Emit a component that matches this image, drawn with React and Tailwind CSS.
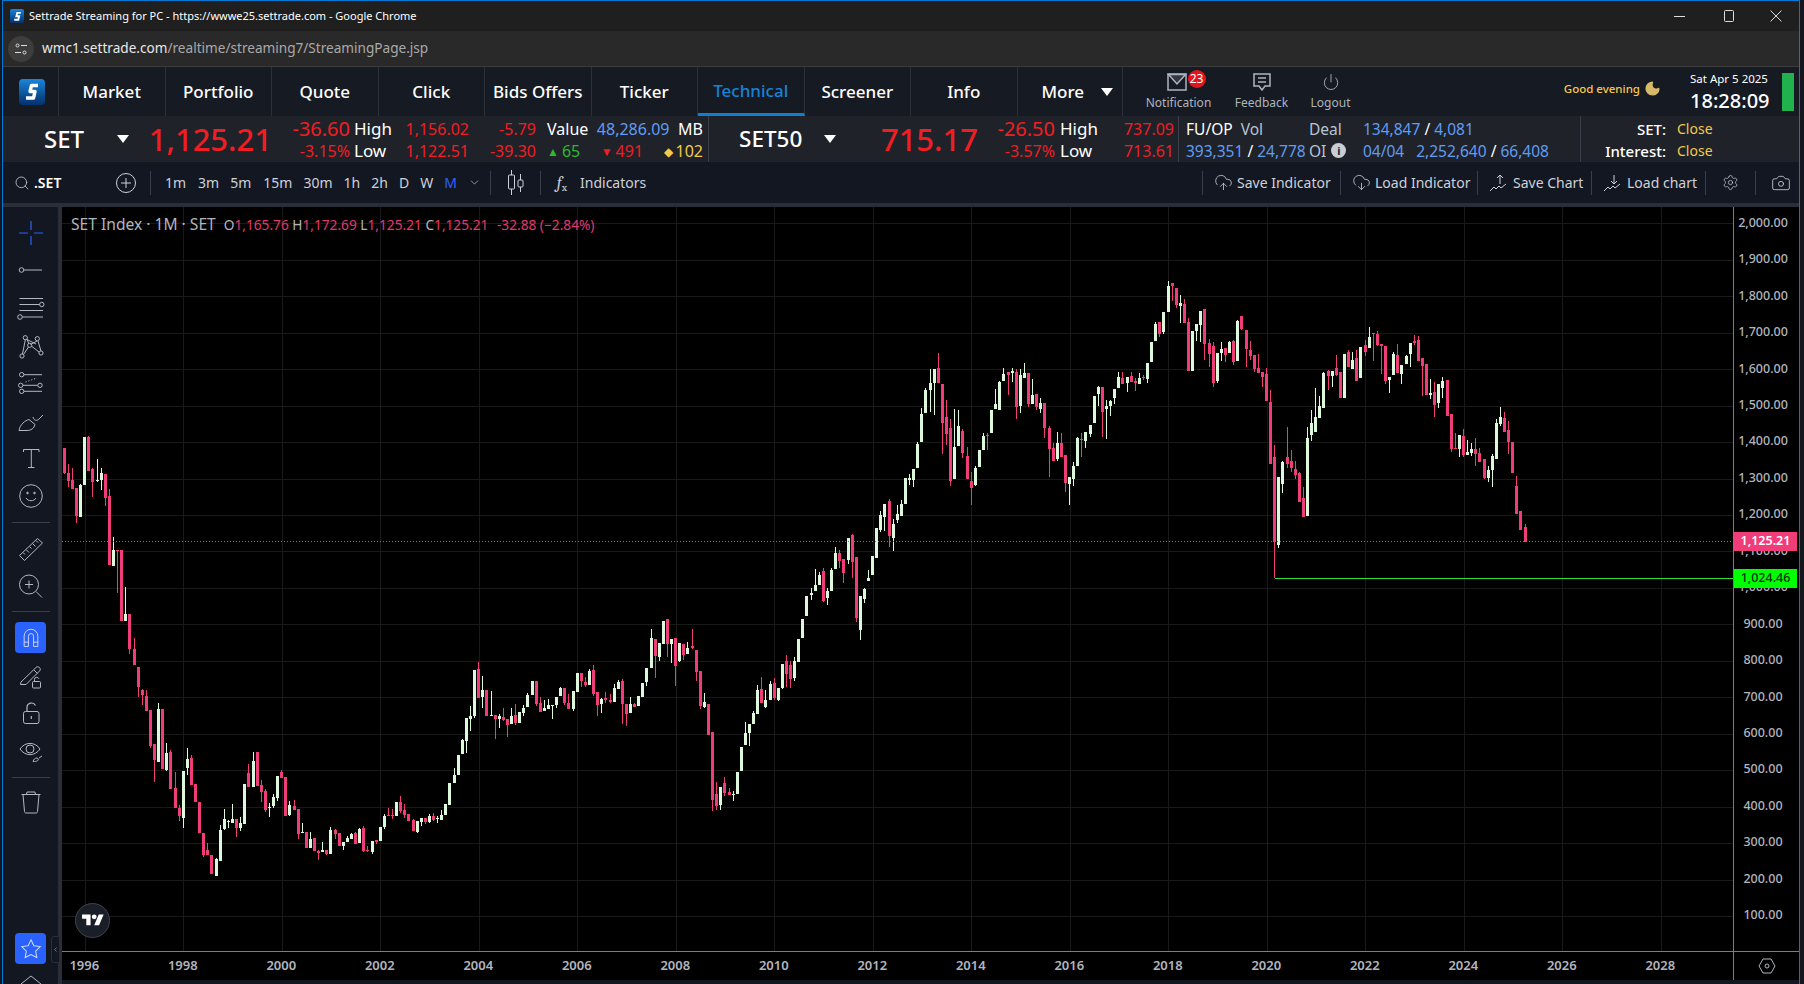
import { Camera, CloudDownload, CloudUpload, Moon, Power, Search, Settings, ChevronDown, ChevronLeft } from 'lucide-react';

// candles read off the chart: [x, bodyTop, bodyBottom, high, low, isUp], 3x crop pixels per block
const chunks = [
  { ox: 50, oy: 430, rows: [
    [43,57,132,0,135,0],[55,132,156,105,174,0],[67,153,180,117,0,0],[79,177,261,0,282,0],[91,168,264,165,0,1],[103,24,168,0,0,1],[115,24,126,21,0,0],[127,120,159,117,204,0],[142,153,157,90,159,1],[154,132,153,117,183,1],[166,135,207,0,231,0],[178,201,408,180,0,0],[190,363,411,324,0,1],[202,363,366,0,492,0],[214,363,576,0,0,0],[226,555,576,474,0,1],[238,555,660,0,675,0],[253,660,708,627,0,0],[265,714,774,0,804,0],[277,783,798,780,828,0],[289,801,846,783,0,0],[301,843,951,0,957,0],[313,945,993,0,1059,0],[325,840,999,822,0,1],[337,840,1020,0,0,0],[349,972,1023,942,1026,1],[361,969,1080,963,0,0],[376,1077,1137,1029,0,0],[388,1137,1161,1128,1176,0],[400,1026,1167,0,1197,1],[412,990,1017,957,1038,1],[424,987,1068,978,0,0],[436,1065,1119,0,0,0],[448,1119,1212,0,0,0],[460,1212,1278,0,1284,0],[472,1263,1278,1242,0,0],[484,1278,1335,0,0,0],[499,1290,1341,1287,0,1],[511,1203,1296,1188,0,1],[523,1170,1200,1140,1203,1],[535,1175,1178,1173,1197,1],[547,1170,1182,1125,0,1],[559,1170,1197,0,1224,0],[571,1182,1197,1164,1206,1],[583,1065,1185,0,0,1],[595,1032,1074,1005,0,0],[610,996,1074,969,0,1],[622,969,1071,0,0,0],[634,1068,1089,1053,1119,0],[646,1086,1143,1080,1149,0],[658,1133,1136,1122,1164,1],[670,1104,1131,1095,1137,1],[682,1041,1107,0,1116,1],[694,1029,1047,1023,0,0],[706,1044,1161,0,0,0],[718,1128,1158,1116,1161,1],[733,1131,1143,1113,0,0],[745,1140,1215,0,1230,0],[757,1209,1212,1182,0,1],[769,1209,1257,0,0,0],[781,1230,1257,1209,0,1],[793,1227,1266,0,0,0],[805,1266,1272,1263,1293,0],[817,1263,1269,1239,0,1],[829,1263,1275,0,1278,0],[841,1203,1275,1194,0,1],[856,1203,1215,1200,1230,0],[868,1212,1251,0,0,0],[880,1239,1251,0,1263,1],[892,1227,1239,1221,0,1],[904,1215,1230,1212,0,1],[916,1212,1245,1209,0,0],[928,1200,1242,1197,0,1],[940,1197,1266,1191,1269,0],[952,1263,1266,1251,1269,0],[967,1236,1269,0,1275,1],[979,1233,1239,0,1245,0],[991,1194,1236,0,0,1],[1003,1161,1194,1155,1200,1],[1015,1158,1161,1137,0,0],[1027,1158,1161,1140,1170,0],[1039,1119,1161,0,0,1],[1051,1119,1146,1101,1152,0],[1063,1143,1158,1125,1167,0],[1075,1155,1176,0,0,0],[1090,1173,1206,1170,0,0],[1102,1176,1209,0,1212,1],[1114,1167,1179,0,1191,1],[1126,1167,1179,0,1185,0],[1138,1161,1179,1155,1182,1],[1150,1161,1173,1152,1176,0],[1162,1166,1169,1161,1182,1],[1174,1158,1173,1143,0,1],[1186,1125,1158,0,0,1],[1198,1062,1128,0,0,1],
  ] },
  { ox: 440, oy: 620, rows: [
    [43,468,492,447,0,1],[55,408,468,0,0,1],[67,363,405,360,0,1],[79,297,366,0,402,1],[91,291,300,261,336,1],[103,153,291,0,297,1],[115,150,237,129,0,0],[127,213,234,171,267,1],[139,213,291,0,0,0],[154,288,291,216,0,1],[166,288,300,0,360,0],[178,291,300,285,327,1],[190,294,303,267,306,0],[202,300,318,0,354,0],[214,291,315,267,0,1],[226,288,312,255,318,0],[238,279,312,0,0,1],[250,267,282,258,291,1],[262,228,264,222,0,1],[277,186,228,0,0,1],[289,186,255,0,261,0],[301,252,279,234,0,0],[313,267,276,243,0,1],[325,258,270,240,0,1],[337,258,261,0,300,1],[349,234,258,0,267,1],[361,207,231,204,0,1],[373,207,252,0,258,0],[385,252,270,225,0,0],[400,216,270,0,276,1],[412,162,219,0,0,1],[424,162,186,0,204,0],[436,189,198,174,204,0],[448,156,198,150,0,1],[460,153,225,138,231,0],[472,219,258,0,291,0],[484,240,255,237,282,1],[496,237,243,219,252,0],[511,243,249,225,252,0],[523,207,249,195,0,1],[535,189,210,183,0,1],[547,186,255,180,315,0],[559,255,285,0,321,0],[571,255,282,234,0,1],[583,255,264,252,0,0],[595,231,261,0,0,1],[607,192,234,0,0,1],[619,147,189,0,201,1],[634,57,147,30,0,1],[646,60,111,0,177,0],[658,72,114,0,126,1],[670,6,75,0,0,1],[682,0,75,0,114,0],[694,60,75,0,132,1],[706,57,141,0,201,0],[718,72,126,0,129,1],[730,75,108,0,123,0],[742,87,105,69,0,1],[757,81,87,30,90,0],[769,93,159,0,186,0],[781,156,261,0,270,0],[793,249,264,222,267,1],
  ] },
  { ox: 700, oy: 520, rows: [
    [25,555,648,0,0,0],[37,639,843,0,876,0],[49,825,861,789,873,0],[61,804,858,0,873,1],[73,792,822,774,831,0],[88,819,828,807,0,0],[100,825,828,816,846,1],[112,759,825,0,0,1],[124,684,756,0,0,1],[136,642,678,609,0,1],[148,615,642,0,681,1],[160,582,615,576,0,1],[172,513,585,498,0,1],[184,510,552,474,0,0],[196,543,564,513,567,1],[211,495,543,486,0,1],[223,492,537,477,543,0],[235,507,543,0,546,1],[247,435,507,0,510,1],[259,426,465,408,504,0],[271,438,480,426,507,0],[283,426,477,414,486,1],[295,360,429,0,0,1],[307,300,357,0,0,1],[319,231,291,0,0,1],[334,222,227,207,243,1],[346,198,216,150,0,1],[358,168,198,159,0,1],[370,156,246,147,249,0],[382,216,237,207,258,1],[394,153,216,147,0,1],[406,102,150,84,0,1],[418,102,126,93,147,0],[430,120,162,0,192,0],[445,57,123,0,135,1],[457,48,129,45,177,0],[469,114,297,0,309,0],[481,231,333,0,363,1],[493,210,240,207,252,1],[505,177,186,153,0,1],[517,111,168,0,0,1],[529,27,117,0,0,1],
  ] },
  { ox: 860, oy: 340, rows: [
    [61,528,573,516,579,1],[73,495,535,0,576,1],[88,486,591,480,624,0],[100,555,597,540,636,1],[112,525,543,498,552,1],[124,495,531,483,0,1],[136,417,495,0,0,1],[148,417,423,405,438,1],[160,390,423,0,444,1],[172,315,387,309,0,1],[184,225,309,207,0,1],[196,153,222,147,0,1],[211,132,153,90,219,1],[223,90,132,0,228,1],[235,87,132,42,0,0],[247,135,252,0,345,0],[259,234,285,183,318,0],[271,267,426,240,441,0],[283,324,420,210,0,1],[295,261,321,213,0,1],[307,276,342,270,357,0],[322,351,420,324,0,0],[334,426,447,399,498,0],[346,387,438,381,441,1],[358,333,384,0,0,1],[370,291,333,282,0,1],[382,288,291,282,333,0],[394,213,282,0,0,1],[406,195,210,150,0,1],[418,129,213,126,0,1],[430,105,126,87,0,1],[445,99,108,0,168,0],[457,96,102,87,129,1],[469,99,204,90,240,0],[481,108,201,90,222,1],[493,102,117,72,0,1],[505,102,195,0,204,0],[517,168,195,120,0,1],[529,165,204,0,213,0],[541,192,210,177,222,1],[553,192,267,0,297,0],[568,267,330,261,414,0],[580,327,366,312,0,0],[592,312,360,279,366,1],[604,312,354,282,0,0],[616,348,432,0,459,0],[628,414,435,0,498,1],[640,381,420,369,441,1],[652,297,381,294,0,1],[664,300,303,282,354,0],[676,279,306,0,327,1],[691,258,285,0,294,1],[703,171,252,0,0,1],[715,144,165,141,201,1],[727,144,219,0,294,0],
  ] },
  { ox: 1100, oy: 270, rows: [
    [19,411,420,393,510,1],[31,396,411,393,441,1],[43,360,387,0,405,1],[55,324,357,309,0,1],[67,327,345,309,0,0],[82,324,342,0,369,1],[94,321,339,309,0,0],[106,336,342,327,366,0],[118,327,345,312,0,1],[130,323,326,318,333,0],[142,282,330,0,342,1],[154,219,279,0,0,1],[166,165,216,159,0,1],[178,159,195,0,204,0],[190,129,189,0,195,1],[205,51,129,36,0,1],[217,42,51,0,96,0],[229,57,108,0,117,0],[241,102,111,78,162,1],[253,105,162,90,0,0],[265,159,306,147,0,0],[277,186,306,0,0,1],[289,165,186,0,216,1],[301,126,168,0,219,1],[313,120,225,0,273,0],[328,222,255,210,294,0],[340,231,342,219,354,0],[352,252,336,0,342,1],[364,240,252,219,276,1],[376,237,258,0,279,0],[388,219,252,216,0,1],[400,216,279,213,288,0],[412,156,276,153,0,1],[424,141,180,0,183,0],[439,183,240,0,294,0],[451,243,261,216,273,0],[463,258,300,0,309,0],[475,297,312,255,0,0],[487,309,324,0,354,0],[499,315,396,297,0,0],[511,399,585,363,0,0],[523,564,820,528,928,0],[535,624,828,0,837,1],[547,579,645,576,672,1],[562,564,585,474,597,0],[574,576,597,543,609,0],[586,600,618,576,630,0],[598,612,699,609,0,0],[610,687,744,654,0,0],[622,507,741,474,0,1],[634,462,498,423,516,1],[646,444,489,357,0,1],[658,411,447,381,0,1],[670,312,417,309,0,1],[685,306,321,303,363,0],[697,306,321,0,354,1],[709,297,318,258,321,0],[721,309,387,0,0,0],[733,255,387,0,0,1],[745,249,294,243,0,0],[757,273,300,249,0,1],[769,267,336,243,0,0],[781,234,327,0,0,1],[796,228,249,213,261,0],[808,204,237,174,0,1],[820,192,195,0,276,0],[832,195,228,186,231,0],[844,225,231,0,315,0],[856,231,336,0,345,0],[868,324,333,0,372,1],[880,255,318,249,0,1],[892,258,312,225,0,0],[904,288,315,0,345,1],[919,261,285,258,0,1],[931,222,255,0,294,1],[943,216,222,198,228,0],[955,213,276,201,0,0],[967,267,291,0,381,0],[979,285,378,0,0,0],[991,372,378,330,390,1],[1003,369,408,339,444,0],[1015,345,402,0,417,1],[1027,336,357,324,387,1],[1042,333,441,0,0,0],[1054,435,540,0,549,0],[1066,537,540,492,0,0],[1078,498,540,0,564,1],[1090,501,558,480,564,0],[1102,549,558,513,0,1],[1114,540,552,522,561,1],[1126,540,555,507,591,0],[1138,552,579,537,0,0],[1153,570,627,0,630,0],[1165,603,627,591,639,1],[1177,561,603,555,654,1],[1189,462,570,450,0,1],[1201,444,465,414,471,1],[1213,447,489,429,0,0],[1225,483,519,456,555,0],[1237,519,612,0,0,0],[1249,651,735,621,0,0],[1261,726,783,0,0,0],[1276,774,818,765,0,0],
  ] },
];

const candles = chunks.flatMap(({ ox, oy, rows }) =>
  rows.map(([x, t, b, h, l, up]) => ({
    x: Math.round(ox + x / 3),
    top: Math.round(oy + t / 3),
    bottom: Math.round(oy + b / 3),
    high: Math.round(oy + (h || t) / 3),
    low: Math.round(oy + (l || b) / 3),
    up,
  }))
);

const priceY = (p) => 224.4 + (2000 - p) * 0.3645;
const prices = ['2,000.00','1,900.00','1,800.00','1,700.00','1,600.00','1,500.00','1,400.00','1,300.00','1,200.00','1,100.00','1,000.00','900.00','800.00','700.00','600.00','500.00','400.00','300.00','200.00','100.00'];
const years = Array.from({ length: 17 }, (_, i) => 1996 + i * 2);

const navItems = ['Market', 'Portfolio', 'Quote', 'Click', 'Bids Offers', 'Ticker', 'Technical', 'Screener', 'Info'];
const intervals = [
  ['1m', 'ml-[14px]'], ['3m', 'ml-[12px]'], ['5m', 'ml-[11px]'], ['15m', 'ml-[12px]'], ['30m', 'ml-[11px]'],
  ['1h', 'ml-[11px]'], ['2h', 'ml-[11px]'], ['D', 'ml-[11px]'], ['W', 'ml-[11px]'],
];

function Chart() {
  return (
    <svg className="block w-full h-full" viewBox="62 208 1671 744" shapeRendering="crispEdges">
      {prices.map((_, i) => {
        const y = Math.round(priceY(2000 - i * 100));
        return <line key={i} x1="62" x2="1733" y1={y} y2={y} stroke="#191919" />;
      })}
      {years.map((_, i) => {
        const x = Math.round(84.5 + i * 98.5);
        return <line key={i} x1={x} x2={x} y1="208" y2="952" stroke="#191919" />;
      })}
      {candles.map((c, i) => {
        const color = c.up ? '#dcf9dc' : '#f03c78';
        return (
          <g key={i} fill={color}>
            <rect x={c.x} y={c.high} width="1" height={Math.max(c.low - c.high, 1)} />
            <rect x={c.x - 1} y={c.top} width="3" height={Math.max(c.bottom - c.top, 1)} />
          </g>
        );
      })}
      <line x1="62" x2="1733" y1="542.5" y2="542.5" stroke="#f03c78" strokeDasharray="1 2" />
      <line x1="1275" x2="1733" y1="579.5" y2="579.5" stroke="#30e030" />
    </svg>
  );
}

function ToolIcon({ children, className = 'text-[#b4b8c2]', size = 28 }) {
  return (
    <svg width={size} height={size} viewBox="0 0 28 28" fill="none" stroke="currentColor" strokeWidth="1" className={className}>
      {children}
    </svg>
  );
}

function LeftToolbar() {
  const slot = 'h-[37.6px] flex items-center justify-center shrink-0';
  return (
    <div className="w-[55px] shrink-0 bg-[#131722] flex flex-col items-center pt-[7px] overflow-hidden relative">
      <div className={slot}>
        <ToolIcon className="text-[#2962ff]"><path d="M14 2v9M14 17v9M2 14h9M17 14h9" strokeWidth="1.2" /></ToolIcon>
      </div>
      <div className={slot}>
        <ToolIcon><circle cx="4.5" cy="14" r="2.3" /><path d="M7 14h18" /></ToolIcon>
      </div>
      <div className={slot}>
        <ToolIcon><path d="M2.5 4.5H26M2.5 10.5H22.5M2.5 16.5H26M5.5 23H26" /><circle cx="24.8" cy="10.5" r="2.2" /><circle cx="3" cy="23" r="2.3" /></ToolIcon>
      </div>
      <div className={slot}>
        <ToolIcon>
          <path d="M8.3 7.8 5.5 22M9.8 7 12 12M10 7.5l9 4.5M20 9l-6.5 3.5M21 9l3 10M15 14.5l7 5.5M11.5 15 6.5 22.5" />
          <circle cx="8.3" cy="5.7" r="2.1" /><circle cx="20.3" cy="6.7" r="2.1" /><circle cx="12.7" cy="13.3" r="2.1" /><circle cx="24" cy="21" r="2.1" /><circle cx="5" cy="24" r="2.1" />
        </ToolIcon>
      </div>
      <div className={slot}>
        <ToolIcon>
          <path d="M7 5.7h18M6 16.3h14.7M7 22.3h18" /><path d="M8.5 13 20 9" strokeDasharray="1.2 1.8" />
          <circle cx="4.7" cy="5.7" r="2.2" /><circle cx="3.7" cy="16.3" r="2.2" /><circle cx="23" cy="16.3" r="2.2" /><circle cx="4.7" cy="22.3" r="2.2" />
        </ToolIcon>
      </div>
      <div className={slot}>
        <ToolIcon><path d="M2 23.5C3 17.5 8 13.5 12 12.5L18 17.5C17 21.5 14 23.5 10 23.5ZM16 10c1 4 4 4 6 2l4-4" /></ToolIcon>
      </div>
      <div className={slot}>
        <ToolIcon><path d="M6.5 8V5.5h15.5V8M14.3 5.5v18M11 23.5h6.5" /></ToolIcon>
      </div>
      <div className={slot}>
        <ToolIcon><circle cx="14" cy="14" r="11.3" /><path d="M9 16c2 3.6 8 3.6 10 0" /><circle cx="10.5" cy="11" r=".8" fill="currentColor" /><circle cx="17.5" cy="11" r=".8" fill="currentColor" /></ToolIcon>
      </div>
      <div className="w-[38px] h-px bg-[#3a3e4a] my-[7px] shrink-0" />
      <div className={slot}>
        <ToolIcon><path d="M2.5 20.5 20.5 3.5 25.5 8 7.5 25.5ZM6 17.5l2 2M9 14.5l3 3M12.5 11.5l2 2M15.5 8.5l3 3M19 5.5l2 2" /></ToolIcon>
      </div>
      <div className={slot}>
        <ToolIcon><circle cx="12" cy="12.5" r="9.5" /><path d="M19 19.5l6 6M8 12.5h8M12 8.5v8" /></ToolIcon>
      </div>
      <div className="w-[38px] h-px bg-[#3a3e4a] mt-[6px] mb-[10px] shrink-0" />
      <div className="w-[31px] h-[31px] rounded-[4px] bg-[#2962ff] flex items-center justify-center shrink-0 mb-[4px]">
        <ToolIcon className="text-[#dfe6f5]" size={24}><path d="M6 25V13a8 8 0 0 1 16 0v12h-5V13a3 3 0 0 0-6 0v12ZM6 20h5M17 20h5" /></ToolIcon>
      </div>
      <div className={slot}>
        <ToolIcon><path d="M4 20 19 5.5c1-1 2.5-1 3.5 0s1 2.5 0 3.5L9 22.5H3.5ZM17 8l3.5 3.5" /><rect x="15.5" y="19.5" width="8" height="6.5" rx="1" /><path d="M17.5 19.5v-2a2.2 2.2 0 0 1 4.3-.7" /></ToolIcon>
      </div>
      <div className={slot}>
        <ToolIcon><rect x="6.5" y="12.5" width="15.5" height="12" rx="2" /><path d="M10 12.5V8.5a4.5 4.5 0 0 1 8.5-2M14.3 17v3" strokeWidth="1.2" /></ToolIcon>
      </div>
      <div className={slot}>
        <ToolIcon><path d="M3 12c5-7.5 15-7.5 20 0-5 7.5-15 7.5-20 0Z" /><circle cx="13" cy="12" r="4" /><path d="M16 24.5c.5-2 2-3.5 4-3.5l1.5 1c-.5 2-1.5 2.5-5.5 2.5ZM22 21l3-2" /></ToolIcon>
      </div>
      <div className="w-[38px] h-px bg-[#3a3e4a] my-[7px] shrink-0" />
      <div className={`${slot} -mt-[2px]`}>
        <ToolIcon><path d="M4.5 6.5h19M6 6.5l1.5 17c0 .8.5 1.5 1.5 1.5h10c1 0 1.5-.7 1.500-1.500l1.500-17M9.500 6.500l.5-2.500h8l.5 2.500" /></ToolIcon>
      </div>
      <div className="flex-1" />
      <div className="w-[31px] h-[31px] rounded-[4px] bg-[#2962ff] flex items-center justify-center shrink-0">
        <svg width="22" height="22" viewBox="0 0 24 24" fill="none" stroke="#cfdcf8" strokeWidth="1.1"><path d="M12 2l3.100 6.400 7 1-5 4.900 1.200 7L12 18l-6.300 3.300 1.200-7-5-4.900 7-1Z" /></svg>
      </div>
      <div className="h-[9px] mt-[11px] shrink-0 overflow-visible">
        <svg width="22" height="22" viewBox="0 0 22 22" fill="none" stroke="#b4b8c2"><path d="M11 1l10 8-10 8L1 9Z" /></svg>
      </div>
    </div>
  );
}

function TopToolbar() {
  const sep = 'w-px h-[24px] bg-[#3a3e4a] shrink-0';
  const right = [
    [<CloudUpload key="a" size={19} strokeWidth={1} />, 'Save Indicator', 'w-[138px]'],
    [<CloudDownload key="b" size={19} strokeWidth={1} />, 'Load Indicator', 'w-[137px]'],
    [<svg key="c" width="20" height="20" viewBox="0 0 20 20" fill="none" stroke="currentColor"><path d="M11 11V2M8 5l3-3 3 3M1 18l4-4 2 2 3-3 2 2 5-4" /></svg>, 'Save Chart', 'w-[114px]'],
    [<svg key="d" width="20" height="20" viewBox="0 0 20 20" fill="none" stroke="currentColor"><path d="M11 2v9M8 8l3 3 3-3M1 18l4-4 2 2 3-3 2 2 5-4" /></svg>, 'Load chart', 'w-[114px]'],
  ];
  return (
    <div className="h-[41px] bg-[#131722] flex items-center text-[#cdd1d9] text-[14px] shrink-0">
      <Search size={16} strokeWidth={1.2} className="ml-[11px] shrink-0" />
      <span className="ml-[4px] w-[84px] text-white font-semibold text-[14px]">.SET</span>
      <svg width="20" height="20" viewBox="0 0 20 20" fill="none" stroke="currentColor" className="shrink-0 -ml-[2px]"><circle cx="10" cy="10" r="9.5" /><path d="M10 5v10M5 10h10" /></svg>
      <div className={`${sep} ml-[14px]`} />
      {intervals.map(([label, gap]) => (
        <span key={label} className={gap}>{label}</span>
      ))}
      <span className="ml-[11px] text-[#2962ff]">M</span>
      <ChevronDown size={13} strokeWidth={1.2} className="ml-[11px] shrink-0" />
      <div className={`${sep} ml-[9px]`} />
      <svg width="20" height="28" viewBox="0 0 20 28" fill="none" stroke="currentColor" className="ml-[15px] shrink-0"><path d="M5.5 1v5M5.5 20v6M14.5 5v6M14.5 18v5" /><rect x="2.5" y="6" width="6" height="14" rx="1" /><rect x="12" y="11" width="5" height="7" rx="1" /></svg>
      <div className={`${sep} ml-[14px]`} />
      <span className="ml-[16px] text-[17px] italic font-serif leading-none">f<sub className="text-[11px] not-italic">x</sub></span>
      <span className="ml-[13px]">Indicators</span>
      <div className="flex-1" />
      {right.map(([icon, label, w]) => (
        <div key={label} className={`${w} h-[24px] border-l border-[#3a3e4a] flex items-center pl-[11px] gap-[4px] shrink-0`}>
          <span className="shrink-0">{icon}</span>
          <span>{label}</span>
        </div>
      ))}
      <div className={sep} />
      <Settings size={17} strokeWidth={1} className="ml-[16px] shrink-0" />
      <div className={`${sep} ml-[16px]`} />
      <Camera size={20} strokeWidth={1} className="ml-[15px] mr-[8px] shrink-0" />
    </div>
  );
}

function Caret() {
  return <span className="w-0 h-0 border-x-[6px] border-x-transparent border-t-[8px] border-t-white shrink-0" />;
}

function TwoRows({ className = '', top, bottom }) {
  return (
    <div className={`flex flex-col justify-center shrink-0 pt-[1px] ${className}`}>
      <div className="h-[22px] leading-[22px] whitespace-nowrap">{top}</div>
      <div className="h-[22px] leading-[22px] whitespace-nowrap">{bottom}</div>
    </div>
  );
}

function TickerRow() {
  const blue = 'text-[#5f9cf5]';
  return (
    <div className="h-[46px] bg-[#1f2229] flex items-stretch shrink-0 text-[16px] text-white">
      <div className="w-[144px] flex items-center pl-[41px] shrink-0">
        <span className="text-[24px] font-medium w-[73px]">SET</span>
        <Caret />
      </div>
      <div className="w-[125px] flex items-center justify-end text-[#f01e23] text-[31px] font-medium shrink-0">1,125.21</div>
      <TwoRows className="w-[78px] text-right text-[#f01e23]" top={<span className="text-[20px]">-36.60</span>} bottom="-3.15%" />
      <TwoRows className="w-[53px] pl-[4px]" top={<span className="text-[17px]">High</span>} bottom={<span className="text-[17px]">Low</span>} />
      <TwoRows className="w-[66px] text-right text-[#f01e23]" top="1,156.02" bottom="1,122.51" />
      <TwoRows className="w-[67px] text-right text-[#f01e23]" top="-5.79" bottom="-39.30" />
      <TwoRows
        className="w-[173px] pl-[11px] pr-[5px] border-r border-[#3a3e4a]"
        top={<div className="flex justify-between"><span>Value</span><span className={blue}>48,286.09</span><span>MB</span></div>}
        bottom={
          <div className="flex items-center justify-between">
            <span className="text-[#2eb82e]"><span className="text-[12px] align-[1px] mr-[3px]">▲</span>65</span>
            <span className="text-[#f01e23]"><span className="text-[12px] align-[1px] mr-[3px]">▼</span>491</span>
            <span className="text-[#f5c84b]"><span className="text-[12px] align-[1px] mr-[3px]">◆</span>102</span>
          </div>
        }
      />
      <div className="w-[172px] flex items-center pl-[30px] shrink-0">
        <span className="text-[22.5px] font-medium w-[85px]">SET50</span>
        <Caret />
      </div>
      <div className="w-[97px] flex items-center justify-end text-[#f01e23] text-[31px] font-medium shrink-0">715.17</div>
      <TwoRows className="w-[77px] text-right text-[#f01e23]" top={<span className="text-[20px]">-26.50</span>} bottom="-3.57%" />
      <TwoRows className="w-[53px] pl-[5px]" top={<span className="text-[17px]">High</span>} bottom={<span className="text-[17px]">Low</span>} />
      <TwoRows className="w-[66px] text-right text-[#f01e23]" top="737.09" bottom="713.61" />
      <div className="w-[5px] border-r border-[#3a3e4a] shrink-0" />
      <TwoRows
        className="w-[130px] pl-[7px] text-[15.5px]"
        top={<span>FU/OP <span className="ml-[4px] text-[#b9c3d2]">Vol</span></span>}
        bottom={<span className={blue}>393,351 <span className="text-white">/</span> 24,778</span>}
      />
      <TwoRows
        className="w-[54px] text-[#b9c3d2] text-[15.5px]"
        top="Deal"
        bottom={<span className="flex items-center gap-[5px]">OI <span className="w-[15px] h-[15px] rounded-full bg-[#c9ced6] text-[#1f2229] text-[11px] font-bold flex items-center justify-center">i</span></span>}
      />
      <TwoRows
        className={`w-[218px] border-r border-[#3a3e4a] text-[15.5px] ${blue}`}
        top={<span>134,847 <span className="text-white">/</span> 4,081</span>}
        bottom={<span>04/04<span className="ml-[12px]">2,252,640 <span className="text-white">/</span> 66,408</span></span>}
      />
      <TwoRows
        className="w-[85px] text-right text-[15px] font-medium"
        top="SET:"
        bottom="Interest:"
      />
      <TwoRows className="pl-[11px] text-[#f5c84b] text-[14px]" top="Close" bottom="Close" />
    </div>
  );
}

function NavBar() {
  return (
    <div className="h-[49px] bg-[#161a22] flex items-stretch shrink-0 text-white">
      <div className="w-[56px] flex items-center justify-center border-r border-[#2c3038] shrink-0 pl-[2px]">
        <div className="w-[26px] h-[26px] rounded-[4px] bg-linear-to-b from-[#1b86d9] to-[#05316e] flex items-center justify-center">
          <svg width="20" height="20" viewBox="0 0 20 20" fill="none" stroke="#fff" strokeWidth="3.4" strokeLinejoin="round"><path d="M16 3.5H9.5L8 9.5h5L11.5 16H4" /></svg>
        </div>
      </div>
      {navItems.map((item) => {
        const active = item === 'Technical';
        return (
          <div
            key={item}
            className={`w-[106.5px] flex items-center justify-center text-[17px] font-medium shrink-0 border-r border-[#2c3038] ${active ? 'text-[#1783d6] border-b-[3px] border-b-[#0f7fd1] pt-[2px]' : ''}`}
          >
            {item}
          </div>
        );
      })}
      <div className="w-[105px] flex items-center pl-[24px] gap-[17px] text-[17px] font-medium border-r border-[#2c3038] shrink-0">
        More
        <Caret />
      </div>
      <div className="w-[112px] flex flex-col items-center justify-end pb-[5px] gap-[4px] shrink-0 relative text-[#aeb4bf]">
        <svg width="20" height="18" viewBox="0 0 20 18" fill="none" stroke="currentColor" strokeWidth="1.5" className="mr-[4px]"><rect x="1" y="1" width="18" height="16" /><path d="M1.5 1.5 10 11l8.5-9.500Z" fill="currentColor" fillOpacity=".2" /></svg>
        <span className="absolute top-[3px] left-[65px] w-[18px] h-[18px] rounded-full bg-[#e5141c] text-white text-[12px] flex items-center justify-center">23</span>
        <span className="text-[12px] leading-[16px]">Notification</span>
      </div>
      <div className="w-[70px] -ml-[8px] flex flex-col items-center justify-end pb-[5px] gap-[4px] shrink-0 text-[#aeb4bf]">
        <svg width="18" height="18" viewBox="0 0 18 18" fill="none" stroke="currentColor" strokeWidth="1.5"><path d="M1 1h16v12h-5l-3 4-3-4H1ZM5 5h8M5 9h8" /></svg>
        <span className="text-[12px] leading-[16px]">Feedback</span>
      </div>
      <div className="w-[68px] flex flex-col items-center justify-end pb-[5px] gap-[4px] shrink-0 text-[#aeb4bf]">
        <Power size={18} strokeWidth={1.2} />
        <span className="text-[12px] leading-[16px]">Logout</span>
      </div>
      <div className="flex-1 flex items-center justify-end pb-[6px] text-[#f5c84b] text-[11.5px] font-medium gap-[4px]">
        Good evening
        <Moon size={17} fill="#d9b86a" stroke="#d9b86a" className="-mr-[3px]" />
      </div>
      <div className="w-[124px] pl-[32px] pr-[10px] flex shrink-0 flex-col items-start justify-center">
        <span className="text-[11.5px] leading-[18px] whitespace-nowrap">Sat Apr 5 2025</span>
        <span className="text-[20px] leading-[26px] font-medium">18:28:09</span>
      </div>
      <div className="w-[12px] h-[38px] bg-[#22b14c] self-center mr-[5px] shrink-0" />
    </div>
  );
}

export default function App() {
  return (
    <div className="w-[1804px] h-[984px] overflow-hidden bg-[#14171f] font-['Noto_Sans',sans-serif]">
      <div className="w-[1798px] h-[984px] ml-[2px] border-x border-t border-[#0078d4] flex flex-col">
        {/* browser chrome */}
        <div className="h-[30px] bg-[#1f1f1f] flex items-center text-white text-[11px] shrink-0">
          <div className="w-[14px] h-[14px] ml-[7px] rounded-[2px] bg-linear-to-b from-[#1b86d9] to-[#05316e] flex items-center justify-center shrink-0">
            <svg width="11" height="11" viewBox="0 0 20 20" fill="none" stroke="#fff" strokeWidth="3.4"><path d="M16 3.5H9.5L8 9.5h5L11.5 16H4" /></svg>
          </div>
          <span className="ml-[5px]">Settrade Streaming for PC - https://wwwe25.settrade.com - Google Chrome</span>
          <div className="flex-1" />
          <svg width="12" height="12" viewBox="0 0 12 12" stroke="#ddd" fill="none"><path d="M0 6.5h11" /></svg>
          <svg width="12" height="12" viewBox="0 0 12 12" stroke="#ddd" fill="none" className="ml-[37px]"><rect x="1.5" y=".5" width="9" height="11" rx="1" /></svg>
          <svg width="12" height="12" viewBox="0 0 12 12" stroke="#ddd" fill="none" className="ml-[35px] mr-[17px]"><path d="M.5.5l11 11M11.5.5l-11 11" /></svg>
        </div>
        <div className="h-[36px] bg-[#292929] border-b border-[#3c3c3c] flex items-center shrink-0 text-[13.6px]">
          <div className="ml-[5px] w-[26px] h-[26px] rounded-full bg-[#3d3d3d] flex items-center justify-center shrink-0">
            <svg width="14" height="14" viewBox="0 0 14 14" fill="none" stroke="#ddd"><circle cx="3.5" cy="3.5" r="1.5" /><path d="M7 3.5h6M1 10.5h6" /><circle cx="10.5" cy="10.5" r="1.5" /></svg>
          </div>
          <span className="ml-[8px] text-[#e8e8e8]">wmc1.settrade.com<span className="text-[#a9a9a9]">/realtime/streaming7/StreamingPage.jsp</span></span>
        </div>

        <NavBar />
        <TickerRow />
        <TopToolbar />
        <div className="h-[4px] bg-[#2a2e39] shrink-0" />

        <div className="flex-1 min-h-0 flex relative">
          <LeftToolbar />
          <div className="w-[4px] bg-[#2a2e39] shrink-0" />
          <div className="flex-1 min-w-0 flex flex-col">
            <div className="h-[744px] flex shrink-0">
              <div className="w-[1671px] relative bg-black shrink-0">
                <Chart />
                {/* legend */}
                <div className="absolute left-[9px] top-[6px] text-[13.7px] whitespace-nowrap text-[#b2b5be] flex gap-[8px] items-baseline">
                  <span className="text-[15.6px]">SET Index · 1M · SET</span>
                  <span>
                    O<span className="text-[#e23a6e]">1,165.76</span> H<span className="text-[#e23a6e]">1,172.69</span> L<span className="text-[#e23a6e]">1,125.21</span> C<span className="text-[#e23a6e]">1,125.21</span> <span className="text-[#e23a6e] ml-[5px]">-32.88 (−2.84%)</span>
                  </span>
                </div>
                {/* TV attribution */}
                <div className="absolute left-[13px] top-[696px] w-[35px] h-[35px] rounded-full bg-[#1a1e29] border border-[#3f434e] flex items-center justify-center">
                  <svg width="22" height="17" viewBox="0 0 36 28" fill="#fff"><path d="M14 22H7V11H0V4h14v18zM28 22h-8l7.5-18h8L28 22z" /><circle cx="20" cy="8" r="4" /></svg>
                </div>
              </div>
              <div className="flex-1 bg-black border-l border-[#7a7d88] relative overflow-hidden">
                <div className="-mt-[2px] flex flex-col">
                  {prices.map((p) => (
                    <div key={p} className="h-[36.45px] flex items-center justify-center pr-[7px] text-[12.5px] font-medium text-[#b2b5be]">{p}</div>
                  ))}
                </div>
                <div className="absolute left-0 top-[325px] w-[63px] h-[19px] bg-[#f03c78] text-white text-[12.5px] font-semibold flex items-center justify-center">1,125.21</div>
                <div className="absolute left-0 top-[362px] w-[63px] h-[19px] bg-[#00ff00] text-[#0d2a0d] text-[12.5px] font-medium flex items-center justify-center">1,024.46</div>
              </div>
            </div>
            <div className="h-[29px] flex shrink-0 border-t border-[#7a7d88] bg-black">
              <div className="w-[1671px] overflow-hidden shrink-0 flex items-center text-[13px] font-semibold text-[#b2b5be]">
                <div className="flex -ml-[27px]">
                  {years.map((y) => (
                    <span key={y} className="w-[98.5px] shrink-0 text-center">{y}</span>
                  ))}
                </div>
              </div>
              <div className="flex-1 border-l border-[#7a7d88] flex items-center justify-center">
                <svg width="18" height="16" viewBox="0 0 18 16" fill="none" stroke="#b2b5be"><path d="M5 1h8l4 7-4 7H5L1 8Z" /><circle cx="9" cy="8" r="2" /></svg>
              </div>
            </div>
            <div className="flex-1 bg-[#131722]" />
          </div>
          {/* panel collapse handle */}
          <div className="absolute left-[48px] top-[729px] w-[9px] h-[27px] bg-[#131722] border border-[#2a2e39] rounded-l-[3px] flex items-center justify-center text-[#b2b5be]">
            <ChevronLeft size={9} />
          </div>
        </div>
      </div>
    </div>
  );
}
